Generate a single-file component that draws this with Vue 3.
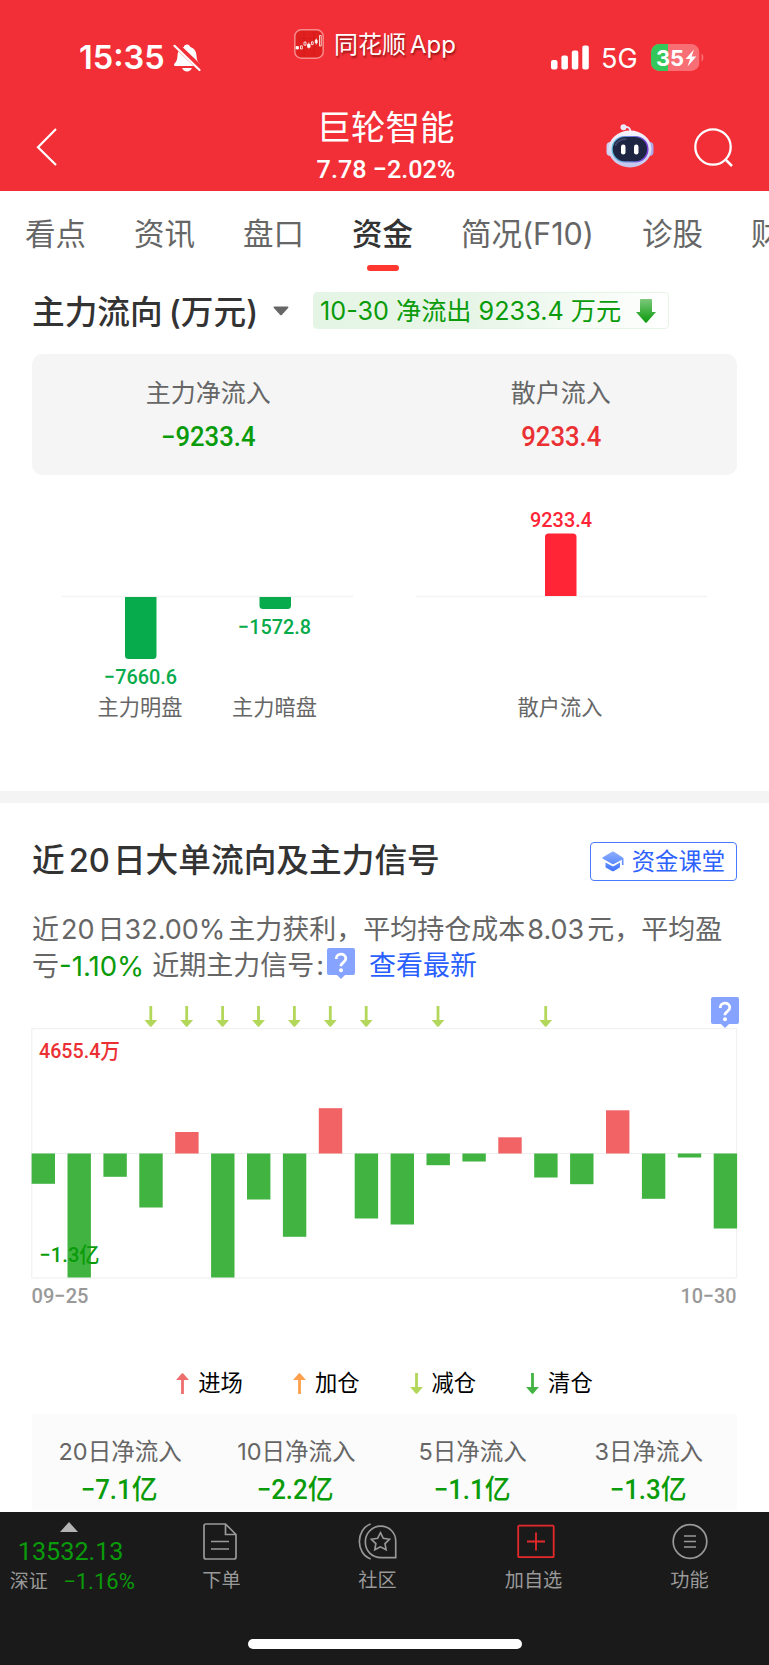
<script setup>
import { ref } from 'vue';

const tabs = ['看点', '资讯', '盘口', '资金', '简况(F10)', '诊股', '财务'];
const activeTab = ref('资金');

const summary = [
  { label: '主力净流入', value: '−9233.4', type: 'down' },
  { label: '散户流入', value: '9233.4', type: 'up' },
];

// bar heights are already in chart units, positive values go up
const flows = [-30.3, -124, -23.3, -54, 21.5, -124, -46, -83.3, 45.3, -65, -71, -11.7, -8, 16.2, -24, -30.7, 43.2, -45.3, -4, -75];
const signalDays = [3, 4, 5, 6, 7, 8, 9, 11, 14];
const zeroY = 125.5;
const step = 35.9;

const legend = [
  { label: '进场', color: '#ee6e6e', up: true },
  { label: '加仓', color: '#ffa04d', up: true },
  { label: '减仓', color: '#b2d75b', up: false },
  { label: '清仓', color: '#43b443', up: false },
];

const periods = [
  { label: '20日净流入', value: '−7.1亿' },
  { label: '10日净流入', value: '−2.2亿' },
  { label: '5日净流入', value: '−1.1亿' },
  { label: '3日净流入', value: '−1.3亿' },
];
</script>

<template>
  <div class="page">
    <header class="header">
      <div class="status">
        <span class="time">15:35</span>
        <svg class="bell" width="28" height="30" viewBox="0 0 28 30">
          <path d="M14 1.5c1.7 0 2.9 1 3.2 2.5 4 1.1 6 4.300 6.300 8.500.2 4 .8 6 3.200 8.300.7.8.3 2.200-1 2.200H2.300C1 23 .6 21.600 1.400 20.800 3.700 18.500 4.300 16.500 4.500 12.500 4.800 8.300 6.800 5.100 10.800 4 11.100 2.500 12.300 1.500 14 1.500z" fill="#fff" />
          <path d="M9.200 25h9.600c-.6 2.200-2.500 3.500-4.800 3.500S9.800 27.200 9.200 25z" fill="#fff" />
          <path d="M2.200 1.200L28.200 26" stroke="#f22f37" stroke-width="6" />
          <path d="M1.500 2.800L26.500 27" stroke="#fff" stroke-width="2.200" stroke-linecap="round" />
        </svg>
        <svg class="app-logo" width="30" height="30" viewBox="0 0 30 30">
          <rect x=".8" y=".8" width="28.400" height="28.400" rx="6.500" fill="#e0201f" stroke="#f78a8b" stroke-width="1.500" />
          <path d="M3 9.500h24M10 3v24M20 3v24" stroke="#d01517" stroke-width=".6" />
          <path d="M2 17.500h2.500v2.500H2zM13.500 15.300h2.600v3h-2.600zM21.300 11h1.900v3h-1.900z" fill="#fff" stroke="#fff" stroke-width=".7" />
          <path d="M6.500 16.800h1.800v3.200H6.500zM10 13h2v3.200h-2zM17.500 12.800h1.700v2.800h-1.700zM25.500 6.500h1.700v10.500h-1.700zM14.800 13.500v6M22.300 9.500V15.500" fill="none" stroke="#fff" stroke-width=".8" />
        </svg>
        <span class="app-name">同花顺<b>App</b></span>
        <svg class="signal" width="38" height="25" viewBox="0 0 38 25">
          <rect x="0" y="15" width="6.500" height="9.500" rx="2" fill="#fff" />
          <rect x="10.400" y="10.500" width="6.500" height="14" rx="2" fill="#fff" />
          <rect x="20.800" y="5.500" width="6.500" height="19" rx="2" fill="#fff" />
          <rect x="31.300" y=".5" width="6.500" height="24" rx="2" fill="#fff" />
        </svg>
        <span class="network">5G</span>
        <svg class="battery" width="54" height="28" viewBox="0 0 54 28">
          <defs>
            <clipPath id="battery-body"><rect width="48.500" height="27" rx="8.500" /></clipPath>
          </defs>
          <g clip-path="url(#battery-body)">
            <rect width="48.500" height="27" fill="#f76f74" />
            <rect width="17" height="27" fill="#34c759" />
          </g>
          <path d="M50.500 9.500c2.500 1 2.500 7 0 8z" fill="#f76f74" />
          <text x="5" y="21.500" textLength="28" class="battery-text">35</text>
          <path d="M43 5.500L34.500 15h4.600l-2.600 7.500L45.300 12.400h-4.700z" fill="#fff" />
        </svg>
      </div>
      <div class="navbar">
        <svg class="back" width="22" height="40" viewBox="0 0 22 40">
          <path d="M20 2L2 20.200 20 38" fill="none" stroke="#fff" stroke-width="2.200" />
        </svg>
        <div class="stock">
          <h1>巨轮智能</h1>
          <div class="quote din">7.78 −2.02%</div>
        </div>
        <div class="nav-actions">
          <svg width="48" height="44" viewBox="0 0 48 44">
            <defs>
              <linearGradient id="shell" x1="0" y1="0" x2="0" y2="1">
                <stop offset="0" stop-color="#f6f5fd" />
                <stop offset="1" stop-color="#c4c5ec" />
              </linearGradient>
              <linearGradient id="visor" x1="0" y1="0" x2="1" y2="0">
                <stop offset="0" stop-color="#5fc4dc" />
                <stop offset="1" stop-color="#7a39d9" />
              </linearGradient>
            </defs>
            <path d="M17.500 3.200c4-.8 7-.2 7 5.500" fill="none" stroke="#eceafa" stroke-width="1.800" />
            <circle cx="17.500" cy="3.200" r="3" fill="#eceafa" />
            <rect x=".5" y="18" width="8" height="14" rx="4" fill="#cfcff2" />
            <rect x="39.500" y="18" width="8" height="14" rx="4" fill="#aaa7e8" />
            <ellipse cx="24" cy="25" rx="21.500" ry="18.500" fill="url(#shell)" />
            <rect x="5.500" y="12" width="37" height="26.500" rx="13" fill="url(#visor)" />
            <rect x="6.800" y="13" width="34.200" height="24.300" rx="12" fill="#1d2543" />
            <path d="M9.500 21c2-4.500 5-5.500 10-6" fill="none" stroke="#3d4668" stroke-width="2" stroke-linecap="round" />
            <rect x="15" y="20.500" width="4.500" height="10" rx="2.200" fill="#fff" />
            <rect x="28" y="20.500" width="4.500" height="10" rx="2.200" fill="#fff" />
          </svg>
          <svg width="40" height="40" viewBox="0 0 40 40">
            <circle cx="19" cy="19" r="17.700" fill="none" stroke="#fff" stroke-width="2.300" />
            <path d="M31 31l7 7" stroke="#fff" stroke-width="2.500" />
          </svg>
        </div>
      </div>
    </header>

    <nav class="tabs">
      <span
        v-for="tab in tabs"
        :key="tab"
        class="tab"
        :class="{ active: tab === activeTab }"
        @click="activeTab = tab"
      >{{ tab }}</span>
    </nav>

    <section class="main-flow">
      <div class="flow-head">
        <h2>主力流向<span class="unit">(万元)</span></h2>
        <svg class="caret" width="16" height="10" viewBox="0 0 16 10">
          <path d="M1.500.5h13c1 0 1.300.8.6 1.500L9 8.700c-.6.700-1.400.7-2 0L.9 2C.2 1.300.5.5 1.500.5z" fill="#666" />
        </svg>
        <div class="flow-tag">
          <span>10-30 净流出 9233.4 万元</span>
          <svg width="20" height="24" viewBox="0 0 20 24">
            <defs>
              <linearGradient id="down" x1="0" y1="0" x2="0" y2="1">
                <stop offset="0" stop-color="#7cc97c" />
                <stop offset="1" stop-color="#0a990a" />
              </linearGradient>
            </defs>
            <path d="M5 0h10q1 0 1 1v12h4L10.700 23.500q-.7.700-1.400 0L0 13h4V1q0-1 1-1z" fill="url(#down)" />
          </svg>
        </div>
      </div>

      <div class="summary">
        <div v-for="item in summary" :key="item.label" class="summary-item">
          <div class="summary-label">{{ item.label }}</div>
          <div class="summary-value din" :class="item.type">{{ item.value }}</div>
        </div>
      </div>

      <svg class="flow-chart" width="705" height="316" viewBox="32 475 705 316">
        <path d="M62 596.500h291M416 596.500h291" stroke="#f3f3f3" stroke-width="1.500" />
        <path d="M125 597h31.500v58.500q0 3.500-3.500 3.500h-24.500q-3.500 0-3.500-3.500z" fill="#07ab4b" />
        <path d="M259.500 597h31.500v8.500q0 3.500-3.500 3.500h-24.500q-3.500 0-3.500-3.500z" fill="#07ab4b" />
        <path d="M545 596v-59q0-3.500 3.500-3.500h24.500q3.500 0 3.500 3.500v59z" fill="#ff2436" />
        <g class="bar-value">
          <text x="104" y="684" textLength="73" lengthAdjust="spacingAndGlyphs" fill="#07ab4b">−7660.6</text>
          <text x="238" y="634" textLength="73" lengthAdjust="spacingAndGlyphs" fill="#07ab4b">−1572.8</text>
          <text x="530" y="527" textLength="62" lengthAdjust="spacingAndGlyphs" fill="#ff2436">9233.4</text>
        </g>
        <g class="bar-name">
          <text x="140" y="714.500">主力明盘</text>
          <text x="274.500" y="714.500">主力暗盘</text>
          <text x="560" y="714.500">散户流入</text>
        </g>
      </svg>
    </section>

    <div class="divider"></div>

    <section class="recent">
      <div class="recent-head">
        <h2>近<i>20</i>日大单流向及主力信号</h2>
        <button class="course">
          <svg width="22" height="21" viewBox="0 0 22 21">
            <defs>
              <linearGradient id="cap" x1="0" y1="0" x2="0" y2="1">
                <stop offset="0" stop-color="#8fb0ff" />
                <stop offset="1" stop-color="#3f73ff" />
              </linearGradient>
            </defs>
            <path d="M10 .8q1-.5 2 0L21.500 7v7h-1.600V8.800L11.800 13q-.8.400-1.600 0L.5 7.500Q0 7 .5 6.600zM3.500 11.500l6.500 3.400q1 .5 2 0l6-3.300v4.200q0 .7-.6 1L12 20q-1 .5-2 0l-5.900-3.200q-.6-.3-.6-1z" fill="url(#cap)" />
          </svg>
          <span>资金课堂</span>
        </button>
      </div>
      <div class="desc">
        <p>近<i>20</i>日32.00%<i class="after">主</i>力获利，平均持仓成本<i class="cost">8.03</i>元，平均盈</p>
        <p class="desc-second">
          <span>亏<em>-1.10%</em></span>
          <span class="signal-label">近期主力信号<i class="colon">:</i></span>
          <svg class="help" width="28" height="31" viewBox="0 0 28 31">
            <path d="M2 0h24q2 0 2 2v23q0 2-2 2h-8l-4 4-4-4H2q-2 0-2-2V2q0-2 2-2z" fill="#85a3ff" />
            <path d="M9.200 11C9.200 4.500 18.800 4.800 18.800 10.500c0 4-4.900 3.600-4.900 7.700" fill="none" stroke="#fff" stroke-width="2.800" />
            <circle cx="14" cy="22.300" r="2" fill="#fff" />
          </svg>
          <a class="latest">查看最新</a>
        </p>
      </div>

      <svg class="history" width="712" height="314" viewBox="31 997 712 314">
        <g v-for="day in signalDays" :key="day" :transform="`translate(${43.1 + day * step} 1006)`">
          <path d="M-1.400 0h2.800v14H6.400L.8 20.500q-.8.700-1.600 0L-6.400 14h5z" fill="#b2d75b" />
        </g>
        <g transform="translate(711 997)">
          <path d="M2 0h24q2 0 2 2v23q0 2-2 2h-8l-4 4-4-4H2q-2 0-2-2V2q0-2 2-2z" fill="#85a3ff" />
          <path d="M9.200 11C9.200 4.500 18.800 4.800 18.800 10.500c0 4-4.900 3.600-4.900 7.700" fill="none" stroke="#fff" stroke-width="2.800" />
          <circle cx="14" cy="22.300" r="2" fill="#fff" />
        </g>
        <g transform="translate(0 1028)">
          <rect x="31.750" y=".7" width="704.800" height="249.300" fill="none" stroke="#f2f2f2" stroke-width="1.300" />
          <path d="M32 125.500h705" stroke="#efefef" stroke-width="1" />
          <rect
            v-for="(flow, i) in flows"
            :key="i"
            :x="31.600 + i * step"
            :y="flow > 0 ? zeroY - flow : zeroY"
            width="23.400"
            :height="Math.abs(flow)"
            :fill="flow > 0 ? '#f16365' : '#41b341'"
          />
        </g>
        <text x="39" y="1057.500" textLength="81" lengthAdjust="spacingAndGlyphs" class="bar-value" fill="#eb3033">4655.4万</text>
        <text x="39.500" y="1262" textLength="60" lengthAdjust="spacingAndGlyphs" class="bar-value" fill="#0a9b0a">−1.3亿</text>
        <text x="31.500" y="1303" textLength="57" lengthAdjust="spacingAndGlyphs" class="date">09−25</text>
        <text x="680.500" y="1303" textLength="56" lengthAdjust="spacingAndGlyphs" class="date">10−30</text>
      </svg>

      <div class="legend">
        <div v-for="item in legend" :key="item.label" class="legend-item">
          <svg :class="{ up: item.up }" width="13" height="21" viewBox="0 0 13 21">
            <path d="M5.100 0h2.800v14h5L7.300 20.500q-.8.700-1.600 0L.1 14h5z" :fill="item.color" />
          </svg>
          <span>{{ item.label }}</span>
        </div>
      </div>

      <div class="periods">
        <div v-for="item in periods" :key="item.label" class="period">
          <div class="period-label">{{ item.label }}</div>
          <div class="period-value din">{{ item.value }}</div>
        </div>
      </div>
    </section>

    <footer class="footer">
      <div class="toolbar">
        <div class="market">
          <svg width="18" height="10" viewBox="0 0 18 10"><path d="M9 0l9 10H0z" fill="#b4b4b4" /></svg>
          <div class="index din">13532.13</div>
          <div class="change"><span>深证</span><b>−1.16%</b></div>
        </div>
        <div class="tool order">
          <svg width="34" height="37" viewBox="0 0 34 37">
            <path d="M3 1h19.500L33 11.500V34q0 2-2 2H3q-2 0-2-2V3q0-2 2-2zM22.500 1v10.500H33" fill="none" stroke="#999" stroke-width="1.700" />
            <path d="M8 18.500h18M8 26h18" stroke="#999" stroke-width="1.700" />
          </svg>
          <span>下单</span>
        </div>
        <div class="tool community">
          <svg width="40" height="38" viewBox="0 0 40 38">
            <path d="M38.200 35.500H23.500C13.500 35.500 7 28.500 7 19.500S14 3.200 22.800 3.200 38.200 10 38.200 18.500z" fill="none" stroke="#999" stroke-width="1.700" />
            <path d="M12.500 1C-3 6.500-3 31.500 12.500 37" fill="none" stroke="#999" stroke-width="1.700" />
            <path d="M22.500 10l2.900 5.700 6.400 1-4.600 4.500 1.100 6.300-5.800-3-5.800 3 1.100-6.300-4.600-4.500 6.400-1z" fill="none" stroke="#999" stroke-width="1.700" />
          </svg>
          <span>社区</span>
        </div>
        <div class="tool add">
          <svg width="38" height="34" viewBox="0 0 38 34">
            <rect x="1.200" y="1.200" width="35.500" height="31.500" rx="1" fill="none" stroke="#e5292b" stroke-width="1.800" />
            <path d="M10 17h18M19 8v18" stroke="#e5292b" stroke-width="1.800" />
          </svg>
          <span>加自选</span>
        </div>
        <div class="tool more">
          <svg width="36" height="36" viewBox="0 0 36 36">
            <circle cx="18" cy="18" r="16.800" fill="none" stroke="#999" stroke-width="1.700" />
            <path d="M12 12.500h12M12 18h12M12 23.500h12" stroke="#999" stroke-width="1.700" />
          </svg>
          <span>功能</span>
        </div>
      </div>
      <div class="home-bar"></div>
    </footer>
  </div>
</template>

<style>
body {
  margin: 0;
  background: #fff;
}
</style>

<style scoped>
.page {
  width: 769px;
  height: 1665px;
  overflow: hidden;
  display: flex;
  flex-direction: column;
  background: #fff;
  color: #333;
  font-family: Inter, "Noto Sans CJK SC", sans-serif;
}

h1,
h2,
p {
  margin: 0;
}

i,
em {
  font-style: normal;
}

svg {
  display: block;
  flex: none;
}

/* slightly condensed numerals */
.din {
  font-family: Roboto, "Noto Sans CJK SC", sans-serif;
  font-weight: 500;
  transform: scaleX(0.95);
  white-space: nowrap;
}

.up {
  color: #eb3033;
}

.down {
  color: #0a9b0a;
}

.header {
  height: 191px;
  flex: none;
  background: #f22f37;
  color: #fff;
}

.status {
  height: 100px;
  display: flex;
  align-items: flex-start;
}

.time {
  width: 94px;
  padding-left: 79px;
  margin-top: 38px;
  font-size: 32.5px;
  font-weight: 600;
  line-height: 40px;
}

.bell {
  margin-top: 43px;
}

.app-logo {
  margin: 29px 10px 0 93px;
}

.app-name {
  width: 217px;
  margin-top: 28px;
  font-size: 24px;
  line-height: 34px;
  white-space: nowrap;
  text-shadow: 1px 2px 2px rgba(90, 0, 0, 0.6);
}

.app-name b {
  margin-left: 4px;
  font-weight: 400;
}

.signal {
  margin-top: 45px;
}

.network {
  width: 36px;
  margin: 42px 0 0 12px;
  font-size: 27px;
  line-height: 34px;
}

.battery {
  margin: 44px 0 0 14px;
}

.battery-text {
  font: 700 22px Inter, sans-serif;
  fill: #fff;
}

.navbar {
  height: 91px;
  display: flex;
  justify-content: space-between;
}

.back {
  margin: 27px 0 0 36px;
}

.stock {
  width: 220px;
  margin-left: 107px;
  text-align: center;
}

.stock h1 {
  font-size: 34.5px;
  font-weight: 400;
  line-height: 56px;
}

.quote {
  font-size: 26.5px;
  line-height: 26px;
}

.nav-actions {
  width: 163px;
  display: flex;
  align-items: flex-start;
  gap: 40px;
  padding-top: 24px;
}

.nav-actions svg + svg {
  margin-top: 4px;
}

.tabs {
  height: 85px;
  flex: none;
  display: flex;
  gap: 48px;
  padding-left: 25px;
  overflow: hidden;
}

.tab {
  flex: none;
  height: 80px;
  position: relative;
  font-size: 30.5px;
  line-height: 86px;
  color: #666;
  white-space: nowrap;
}

.tab.active {
  color: #333;
  font-weight: 500;
}

.tab.active::after {
  content: '';
  position: absolute;
  left: 50%;
  bottom: 0;
  width: 32px;
  height: 6px;
  margin-left: -16px;
  border-radius: 3px;
  background: #ff372e;
}

.main-flow {
  height: 515px;
  flex: none;
  padding: 0 32px;
}

.flow-head {
  height: 78px;
  display: flex;
  align-items: flex-start;
}

h2 {
  font-size: 32.7px;
  font-weight: 500;
  line-height: 44px;
  white-space: nowrap;
}

.flow-head h2 {
  width: 241px;
  margin-top: 14px;
}

.unit {
  margin-left: 6px;
}

.caret {
  margin: 30px 24px 0 0;
}

.flow-tag {
  box-sizing: border-box;
  width: 356px;
  height: 37px;
  margin-top: 16px;
  padding: 0 12px 0 6px;
  display: flex;
  align-items: center;
  justify-content: space-between;
  border: 1px solid #e5f5e5;
  border-radius: 4px;
  background: linear-gradient(90deg, #e5f5e5, #e7f5e7 45%, #fff);
  color: #0a9b0a;
  font-size: 25.2px;
  white-space: nowrap;
}

.flow-tag span {
  padding-bottom: 3px;
}

.summary {
  height: 121px;
  display: flex;
  border-radius: 10px;
  background: #f5f5f5;
}

.summary-item {
  flex: 1;
  text-align: center;
  padding-top: 20px;
}

.summary-label {
  font-size: 25px;
  line-height: 38px;
  color: #666;
}

.summary-value {
  font-size: 27px;
  line-height: 34px;
  margin-top: 8px;
}

.bar-value {
  font: 500 21px Roboto, "Noto Sans CJK SC", sans-serif;
}

.bar-name {
  font-size: 21.2px;
  text-anchor: middle;
  fill: #666;
}

.divider {
  height: 12px;
  flex: none;
  background: #f4f4f4;
}

.recent {
  height: 709px;
  flex: none;
  padding: 0 32px;
}

.recent-head {
  height: 109px;
  display: flex;
  justify-content: space-between;
  align-items: flex-start;
}

.recent-head h2 {
  margin-top: 35px;
}

.recent-head i {
  margin: 0 3px 0 4px;
}

.course {
  box-sizing: border-box;
  width: 147px;
  height: 39px;
  margin-top: 39px;
  padding: 0 11px;
  display: flex;
  align-items: center;
  justify-content: space-between;
  border: 1.5px solid #4a78ff;
  border-radius: 4px;
  background: #fff;
  color: #2e62ff;
  font-family: inherit;
  font-size: 23.3px;
}

.course span {
  padding-bottom: 3px;
}

.desc {
  height: 85px;
  font-size: 27px;
  line-height: 36px;
  color: #666;
  white-space: nowrap;
}

.desc i {
  margin: 0 3px 0 2px;
}

.desc i.after {
  margin: 0 0 0 3px;
}

.desc-second {
  display: flex;
}

.desc em {
  font-size: 27.6px;
  color: #0a9b0a;
}

.desc .signal-label {
  margin-left: 8px;
}

.latest {
  margin-left: 14px;
  color: #2a5fff;
}

.history {
  margin-left: -1px;
}

.date {
  font: 500 21px Roboto, sans-serif;
  fill: #999;
}

.legend {
  height: 103px;
  display: flex;
  justify-content: center;
  gap: 50px;
}

.legend-item {
  height: 144px;
  display: flex;
  align-items: center;
  gap: 9px;
  color: #000;
  font-size: 22.3px;
}

.legend-item span {
  padding-bottom: 4px;
}

.legend-item svg.up {
  transform: rotate(180deg);
}

.periods {
  height: 96px;
  display: flex;
  background: #fbfbfb;
}

.period {
  flex: 1;
  padding-top: 20px;
  text-align: center;
}

.period-label {
  font-size: 23.5px;
  line-height: 36px;
  color: #666;
}

.period-value {
  margin-left: -2px;
  font-size: 27.2px;
  line-height: 40px;
  color: #0a9b0a;
}

.footer {
  height: 153px;
  flex: none;
  background: #1a1a1a;
  color: #999;
}

.toolbar {
  height: 127px;
  display: flex;
}

.market {
  width: 143.5px;
  display: flex;
  flex-direction: column;
  align-items: center;
  padding-top: 10px;
}

.market svg {
  margin-right: 6px;
}

.index {
  margin: 3px 2px 0 0;
  font-size: 26.5px;
  font-weight: 400;
  line-height: 32px;
  color: #0a9b0a;
}

.change {
  width: 125px;
  margin-left: 1px;
  display: flex;
  justify-content: space-between;
  align-items: center;
  font-size: 19px;
  line-height: 29px;
}

.change b {
  font: 400 22px Roboto, sans-serif;
  color: #0a9b0a;
}

.tool {
  width: 156px;
  display: flex;
  flex-direction: column;
  align-items: center;
  padding-top: 11px;
}

.tool svg {
  height: 37px;
}

.order svg {
  margin-right: 3px;
}

.add svg {
  margin-left: 4px;
}

.tool span {
  margin-top: 6px;
  font-size: 19.200px;
  line-height: 28px;
}

.home-bar {
  width: 274px;
  height: 10px;
  margin: 0 auto;
  border-radius: 5px;
  background: #fff;
}
</style>
